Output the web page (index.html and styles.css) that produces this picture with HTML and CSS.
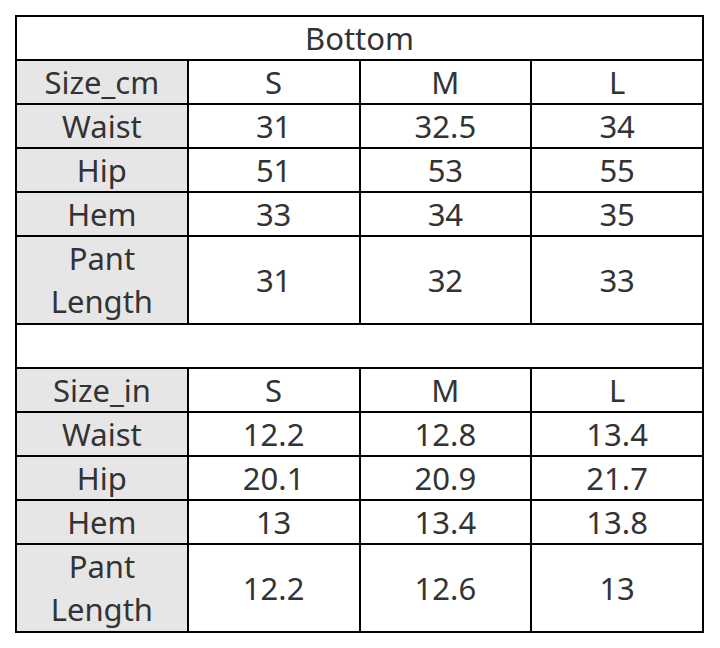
FILE: index.html
```html
<!DOCTYPE html>
<html>
<head>
<meta charset="utf-8">
<link rel="stylesheet" href="styles.css">
</head>
<body>
<table class="size-table">
  <colgroup>
    <col class="c"><col class="c"><col class="c"><col class="c">
  </colgroup>
  <tr><td class="title" colspan="4">Bottom</td></tr>
  <tr><td class="head">Size_cm</td><td>S</td><td>M</td><td>L</td></tr>
  <tr><td class="head">Waist</td><td>31</td><td>32.5</td><td>34</td></tr>
  <tr><td class="head">Hip</td><td>51</td><td>53</td><td>55</td></tr>
  <tr><td class="head">Hem</td><td>33</td><td>34</td><td>35</td></tr>
  <tr class="tall"><td class="head">Pant<br>Length</td><td>31</td><td>32</td><td>33</td></tr>
  <tr><td class="blank" colspan="4"></td></tr>
  <tr><td class="head">Size_in</td><td>S</td><td>M</td><td>L</td></tr>
  <tr><td class="head">Waist</td><td>12.2</td><td>12.8</td><td>13.4</td></tr>
  <tr><td class="head">Hip</td><td>20.1</td><td>20.9</td><td>21.7</td></tr>
  <tr><td class="head">Hem</td><td>13</td><td>13.4</td><td>13.8</td></tr>
  <tr class="tall"><td class="head">Pant<br>Length</td><td>12.2</td><td>12.6</td><td>13</td></tr>
</table>
</body>
</html>
```
FILE: styles.css
```css
html, body {
  margin: 0;
  padding: 0;
  background: #ffffff;
}
body {
  padding: 15px 0 0 15px;
}
.size-table {
  border-collapse: collapse;
  table-layout: fixed;
  width: 689px;
  font-family: "Noto Sans", "Open Sans", sans-serif;
  font-size: 31px;
  color: #333333;
}
.size-table td {
  border: 2px solid #000;
  padding: 0;
  height: 42px;
  line-height: 42px;
  text-align: center;
  vertical-align: middle;
  white-space: nowrap;
}
.size-table tr.tall td {
  height: 86px;
  line-height: 43px;
}
.size-table td.head {
  background: #e7e6e6;
}
```
